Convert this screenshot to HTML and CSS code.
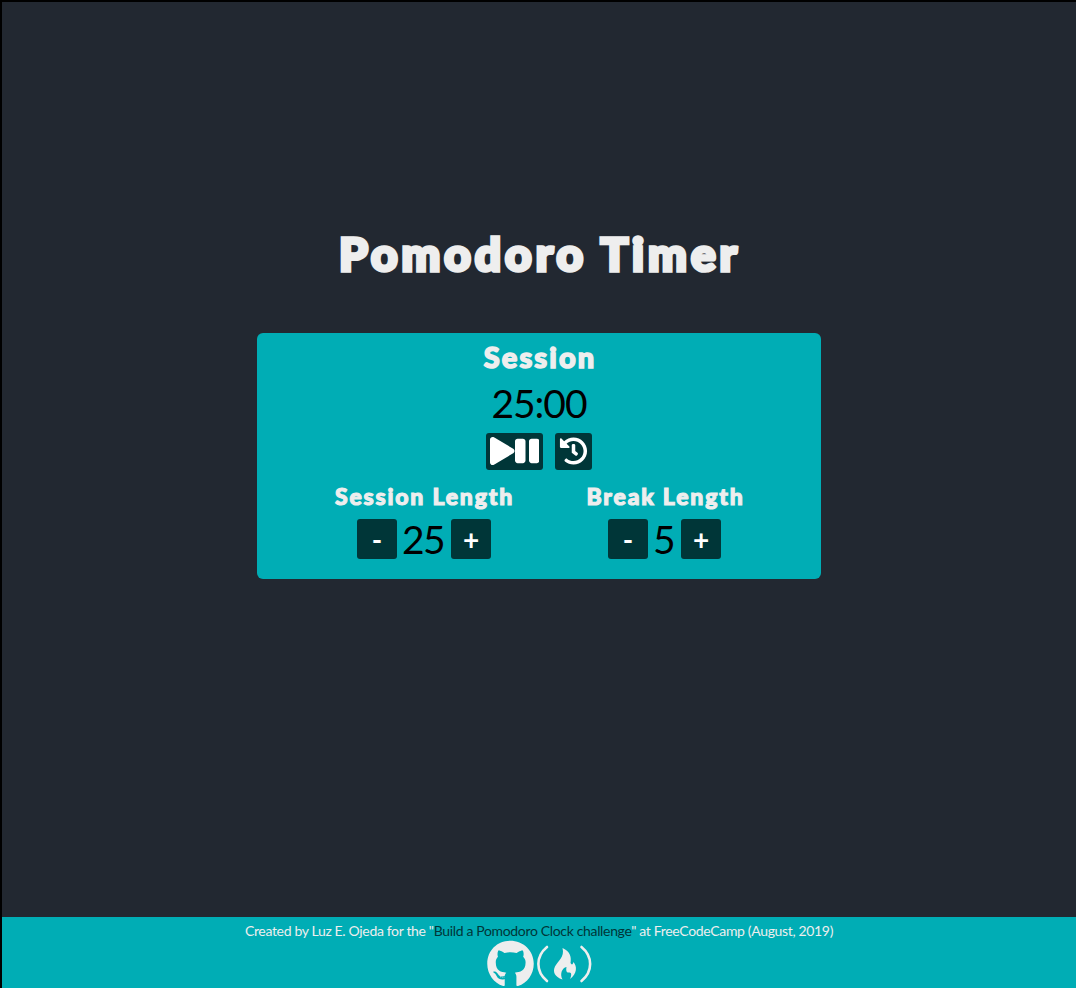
FILE: index.html
```html
<!DOCTYPE html>
<html lang="en">
<head>
<meta charset="utf-8">
<title>Pomodoro Timer</title>
<link rel="stylesheet" href="styles.css">
</head>
<body>
<div class="page">
  <main class="main">
    <h1 class="title">Pomodoro Timer</h1>
    <section class="clock">
      <h2 class="label">Session</h2>
      <div class="time">25:00</div>
      <div class="controls">
        <button class="control" aria-label="Start or pause">
          <svg class="half" viewBox="0 0 448 512"><path d="M424.4 214.7L72.4 6.6C43.8-10.3 0 6.1 0 47.9V464c0 37.5 40.7 60.1 72.4 41.3l352-208c31.4-18.5 31.5-64.1 0-82.6z"/></svg><svg class="half" viewBox="0 0 448 512"><path d="M144 479H48c-26.500 0-48-21.500-48-48V79c0-26.500 21.500-48 48-48h96c26.500 0 48 21.500 48 48v352c0 26.500-21.500 48-48 48zm304-48V79c0-26.500-21.500-48-48-48h-96c-26.500 0-48 21.500-48 48v352c0 26.500 21.500 48 48 48h96c26.500 0 48-21.500 48-48z"/></svg>
        </button>
        <button class="control" aria-label="Reset">
          <svg class="reset" viewBox="0 0 512 512"><path d="M504 255.531c.253 136.640-111.180 248.372-247.820 248.468-59.015.042-113.223-20.530-155.822-54.911-11.077-8.940-11.905-25.541-1.839-35.607l11.267-11.267c8.609-8.609 22.353-9.551 31.891-1.984C173.062 425.135 212.781 440 256 440c101.705 0 184-82.311 184-184 0-101.705-82.311-184-184-184-48.814 0-93.149 18.969-126.068 49.932l50.754 50.754c10.080 10.080 2.941 27.314-11.313 27.314H24c-8.837 0-16-7.163-16-16V38.627c0-14.254 17.234-21.393 27.314-11.314l49.372 49.372C129.209 34.136 189.552 8 256 8c136.810 0 247.747 110.780 248 247.531zm-180.912 78.784l9.823-12.630c8.138-10.463 6.253-25.542-4.210-33.679L288 256.349V152c0-13.255-10.745-24-24-24h-16c-13.255 0-24 10.745-24 24v135.651l65.409 50.874c10.463 8.137 25.541 6.253 33.679-4.210z"/></svg>
        </button>
      </div>
      <div class="lengths">
        <div class="length">
          <h3 class="sublabel">Session Length</h3>
          <div class="stepper"><button class="step">-</button><span class="count">25</span><button class="step">+</button></div>
        </div>
        <div class="length">
          <h3 class="sublabel sublabel-break">Break Length</h3>
          <div class="stepper stepper-break"><button class="step">-</button><span class="count count-break">5</span><button class="step">+</button></div>
        </div>
      </div>
    </section>
  </main>
  <footer class="footer">
    <p class="credit">Created by Luz E. Ojeda for the "<a class="link">Build a Pomodoro Clock challenge</a>" at FreeCodeCamp (August, 2019)</p>
    <div class="icons">
      <svg class="github" viewBox="0 0 496 512"><path d="M165.900 397.400c0 2-2.300 3.600-5.200 3.600-3.300.3-5.600-1.300-5.600-3.600 0-2 2.300-3.600 5.200-3.600 3-.3 5.600 1.300 5.600 3.600zm-31.100-4.500c-.7 2 1.300 4.300 4.300 4.900 2.600 1 5.600 0 6.200-2s-1.300-4.300-4.300-5.200c-2.600-.7-5.500.3-6.200 2.300zm44.200-1.700c-2.900.7-4.900 2.600-4.600 4.900.3 2 2.900 3.300 5.900 2.600 2.900-.7 4.900-2.600 4.600-4.600-.3-1.900-3-3.200-5.900-2.900zM244.800 8C106.100 8 0 113.300 0 252c0 110.900 69.800 205.800 169.500 239.200 12.800 2.300 17.300-5.600 17.300-12.100 0-6.200-.3-40.400-.3-61.400 0 0-70 15-84.700-29.800 0 0-11.400-29.100-27.800-36.600 0 0-22.900-15.700 1.600-15.400 0 0 24.900 2 38.600 25.800 21.900 38.600 58.600 27.500 72.900 20.900 2.300-16 8.800-27.100 16-33.700-55.900-6.200-112.300-14.300-112.300-110.500 0-27.500 7.600-41.300 23.600-58.900-2.600-6.500-11.100-33.300 2.600-67.900 20.900-6.500 69 27 69 27 20-5.600 41.500-8.500 62.800-8.500s42.800 2.900 62.800 8.500c0 0 48.100-33.600 69-27 13.700 34.700 5.200 61.400 2.600 67.900 16 17.700 25.800 31.500 25.800 58.900 0 96.500-58.900 104.200-114.800 110.500 9.200 7.900 17 22.900 17 46.400 0 33.700-.3 75.400-.3 83.600 0 6.500 4.600 14.400 17.300 12.100C428.200 457.800 496 362.900 496 252 496 113.300 383.500 8 244.800 8z"/></svg>
      <svg class="fcc" viewBox="0 0 58 48"><path class="paren" d="M11 7C-.5 16.500-.5 31.500 11 41M45.500 7C57 16.500 57 31.500 45.500 41"/><path d="M26.500 8C34.500 11.500 35.500 17.500 34.500 23C35.500 25 37 25 37.300 22C41.500 26 41 34 34 39C36 35 35.500 32 33 32.500C30 33 30 30 30.500 27C26 28 23.500 34 26.500 39.500C18.500 37 16.500 31.500 19 26.500C21.500 21.500 29 17 26.500 8Z"/></svg>
    </div>
  </footer>
</div>
</body>
</html>
```
FILE: styles.css
```css
* { box-sizing: border-box; }
body { margin: 0; background: #000; font-family: Lato, sans-serif; }
h1, h2, h3, p { margin: 0; }
svg { display: block; fill: currentColor; flex: none; }
.page { height: 988px; padding: 2px 0 0 2px; display: flex; flex-direction: column; }
.main { flex: 1; background: #222831; display: flex; flex-direction: column; align-items: center; padding-top: 221px; }
.title { height: 62px; line-height: 62px; margin-bottom: 48px; padding-left: 2px; font-size: 46px; font-weight: 900; letter-spacing: 4px; white-space: nowrap; color: #eee; -webkit-text-stroke: 3.6px #eee; stroke-linejoin: round; }
.clock { width: 564px; height: 246px; border-radius: 6px; background: #00adb5; display: flex; flex-direction: column; align-items: center; }
.label { height: 49px; line-height: 48px; padding-left: 2px; font-size: 29px; font-weight: 900; letter-spacing: 2.1px; color: #eee; -webkit-text-stroke: 1.5px #eee; }
.time { height: 51px; line-height: 43px; font-size: 39px; letter-spacing: -1px; }
.controls { display: flex; gap: 12px; height: 37px; }
.control { height: 37px; padding: 3px 4px 5px; border: 0; border-radius: 3px; background: #003638; color: #fff; display: flex; align-items: center; justify-content: center; }
.half { width: 24.500px; height: 28px; }
.reset { width: 29px; height: 28px; }
.lengths { display: flex; gap: 72px; margin-top: 9px; }
.length { display: flex; flex-direction: column; align-items: center; }
.sublabel { height: 40px; line-height: 34px; width: 180px; display: flex; justify-content: center; padding-left: 1px; white-space: nowrap; font-size: 23px; font-weight: 900; letter-spacing: 1.8px; color: #eee; -webkit-text-stroke: 1.1px #eee; }
.sublabel-break { width: 158px; }
.stepper { display: flex; align-items: center; height: 40px; }
.stepper-break { padding-right: 1px; }
.step { width: 40px; height: 40px; padding: 0; border: 0; border-radius: 3px; background: #003638; color: #fff; font: 700 28px/40px Lato, sans-serif; }
.count { width: 54px; padding-left: 5px; font-size: 39px; line-height: 40px; letter-spacing: -1.500px; }
.count-break { width: 33px; }
.footer { height: 71px; background: #00adb5; color: #eee; padding-top: 5px; }
.credit { height: 18px; line-height: 18px; font-size: 14px; letter-spacing: -.34px; text-align: center; white-space: nowrap; }
.link { color: #003638; }
.icons { display: flex; justify-content: center; gap: 2px; padding-left: 2px; }
.github { width: 47px; height: 48px; }
.fcc { width: 58px; height: 48px; }
.paren { fill: none; stroke: currentColor; stroke-width: 2.600; stroke-linecap: round; }
```
